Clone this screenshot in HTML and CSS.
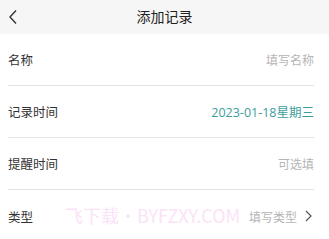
FILE: index.html
```html
<!DOCTYPE html>
<html lang="zh">
<head>
<meta charset="utf-8">
<link rel="stylesheet" href="styles.css">
</head>
<body>
<div class="page">
  <header class="nav">
    <svg class="back" width="10" height="16" viewBox="0 0 10 16"><path d="M8 1.5 L2 8 L8 14.5" fill="none" stroke="#333" stroke-width="1.4"/></svg>
    <div class="title">添加记录</div>
  </header>
  <div class="list">
    <div class="row"><span class="label">名称</span><span class="value ph">填写名称</span></div>
    <div class="row"><span class="label">记录时间</span><span class="value date">2023-01-18星期三</span></div>
    <div class="row"><span class="label">提醒时间</span><span class="value ph">可选填</span></div>
    <div class="row last"><span class="label">类型</span><span class="value ph">填写类型<svg class="chev" width="7" height="12" viewBox="0 0 7 12"><path d="M1 1 L6 6 L1 11" fill="none" stroke="#555" stroke-width="1.2"/></svg></span></div>
  </div>
  <div class="watermark">飞下载・BYFZXY.COM</div>
</div>
</body>
</html>
```
FILE: styles.css
```css
* { box-sizing: border-box; }
html, body { margin: 0; padding: 0; background: #fff; }
body { font-family: "Noto Sans CJK SC", "Noto Sans", sans-serif; width: 329px; height: 239px; overflow: hidden; }
.page { position: relative; width: 329px; height: 239px; }
.nav { height: 34px; background: #f6f6f6; display: flex; align-items: center; justify-content: center; position: relative; }
.back { position: absolute; left: 8px; top: 9px; }
.title { font-size: 14px; color: #222; line-height: 1; margin-top: -2px; }
.list { padding: 0 15px 0 8px; }
.row { height: 52px; border-bottom: 1px solid #e3e3e3; display: flex; align-items: center; justify-content: space-between; }
.row.last { border-bottom: none; }
.label { font-size: 12.5px; color: #333; }
.value { font-size: 12px; display: flex; align-items: center; }
.ph { color: #b5b5b5; }
.date { color: #3c9e9a; font-size: 12.5px; font-family: "Open Sans", "Noto Sans CJK SC", sans-serif; }
.chev { margin-left: 8px; margin-right: 2px; }
.watermark { position: absolute; left: 65px; top: 205px; font-size: 18px; color: #fbe3f7; letter-spacing: 0; font-family: "Noto Sans CJK SC", sans-serif; line-height: 1.2; pointer-events: none; }
```
